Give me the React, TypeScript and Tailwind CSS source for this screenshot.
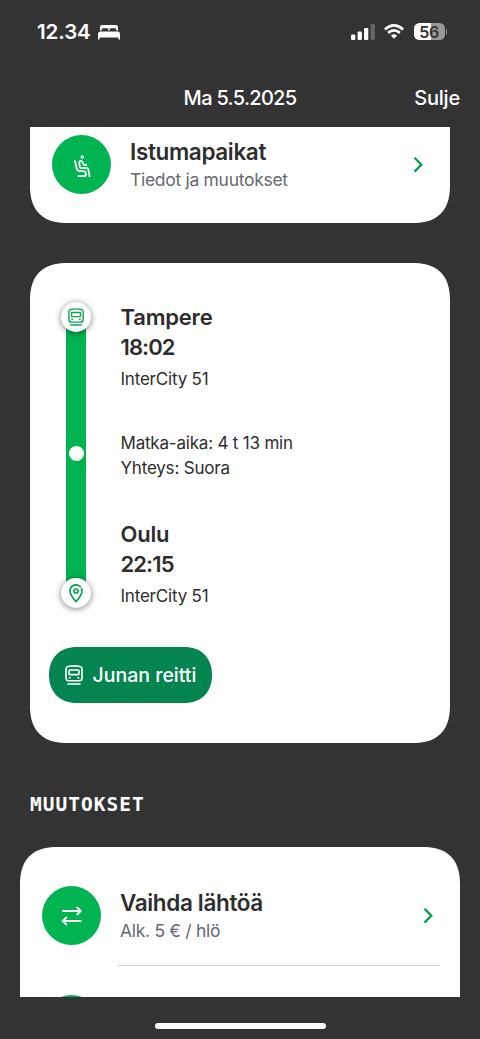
import type { ReactNode } from 'react';

const SANS = "font-['Inter',sans-serif]";

function TrainIcon({ className }: { className?: string }) {
  return (
    <svg viewBox="0 0 18 20" fill="none" stroke="currentColor" strokeWidth="1.600" className={className}>
      <path d="M3 1.500Q9 .3 15 1.500Q16.900 1.900 17 3.800V13Q17 15.700 14.500 15.800H3.500Q1 15.700 1 13V3.800Q1.100 1.900 3 1.500Z" />
      <rect x="4" y="5" width="10" height="4.600" rx="0.800" />
      <path d="M3.700 12.700H5.700M12.300 12.700H14.300" />
      <path d="M3 19H15" strokeLinecap="round" />
    </svg>
  );
}

function PinIcon() {
  return (
    <svg viewBox="0 0 14 19" fill="none" stroke="currentColor" strokeWidth="1.700" className="w-3.5 h-[19px]">
      <path d="M11.200 2.600A6 6 0 0 0 1 7C1 11 4.500 14.800 7 17.600C9.500 14.800 13 11 13 7Q13 5.800 12.500 4.700" strokeLinecap="round" strokeLinejoin="round" />
      <circle cx="7" cy="7" r="2" />
    </svg>
  );
}

function SeatIcon() {
  return (
    <svg viewBox="0 0 18 24" fill="none" stroke="white" strokeWidth="1.800" strokeLinejoin="round" className="w-[18px] h-6 mt-0.5">
      <circle cx="9.200" cy="3" r="1.700" fill="white" stroke="none" />
      <path d="M1.800 6.400L3.800 15Q4.400 17 6.600 17.100H10.300" />
      <path d="M14 10.900H11.200L9.200 7.800Q8.300 6.600 7.100 7.100Q5.900 7.700 6.200 9.300L7 13Q7.300 14.200 8.600 14.200H14Q15.100 14.200 15.300 15.400L16.700 23" />
      <path d="M4.700 22.200H10.900Q13 22.100 12.900 19.700Q12.700 17.100 10.300 17.100" />
    </svg>
  );
}

function SwapIcon() {
  return (
    <svg viewBox="0 0 22 20" fill="none" stroke="white" strokeWidth="1.900" className="w-[22px] h-5">
      <path d="M1 5H19.500M15.700 1L19.700 5L15.700 9" />
      <path d="M20.500 15H2M5.800 11L1.800 15L5.800 19" />
    </svg>
  );
}

function Chevron() {
  return (
    <svg viewBox="0 0 10 16" fill="none" stroke="#0a9c4c" strokeWidth="2.300" className="w-2.5 h-4">
      <path d="M1.500 .8L8.300 7.700L1.500 14.600" />
    </svg>
  );
}

function StatusBar() {
  return (
    <div className="h-[65px] flex items-center justify-between pl-[37px] pr-[33px] text-white">
      <div className="flex items-center gap-[7px]">
        <span className="text-[20.5px] font-semibold tracking-[-0.1px]">12.34</span>
        <svg viewBox="0 0 22 15" fill="white" className="w-[22px] h-[15px]">
          <path d="M2 5.500V2Q2 0 4 0H18Q20 0 20 2V5.500H18.200V4.500Q18.200 3.300 17 3.300H12.800Q11.700 3.300 11.700 4.500V5.500H10.300V4.500Q10.300 3.300 9.200 3.300H5Q3.800 3.300 3.800 4.500V5.500Z" />
          <path d="M0 14.500V9Q0 6.500 2.500 6.500H19.500Q22 6.500 22 9V14.500H20.400V12.400H1.600V14.500Z" />
        </svg>
      </div>
      <div className="flex items-center -mt-0.5">
        <svg viewBox="0 0 24 16" fill="white" className="w-6 h-4">
          <rect x="0" y="10.500" width="4.300" height="5.500" rx="1.200" />
          <rect x="6.600" y="7.500" width="4.300" height="8.500" rx="1.200" />
          <rect x="13" y="4" width="4.300" height="12" rx="1.200" />
          <rect x="19.600" y="0" width="4.300" height="16" rx="1.200" opacity="0.250" />
        </svg>
        <svg viewBox="0 0 20 15" fill="none" stroke="white" strokeWidth="2.700" className="w-5 h-[15px] ml-[9px]">
          <path d="M.9 5.400Q10-2.600 19.100 5.400" />
          <path d="M4.100 8.900Q10 3.900 15.900 8.900" />
          <path d="M6.900 11.500Q10 9 13.100 11.500L10 14.800Z" fill="white" stroke="none" />
        </svg>
        <div className="ml-[10px] w-[31px] h-[17px] rounded-[5.5px] bg-linear-to-r from-white from-56% to-[#989898] to-56% flex items-center justify-center text-[#333] text-[16px] leading-none font-semibold tracking-[-0.5px]">
          56
        </div>
        <div className="ml-px w-[1.500px] h-1.5 rounded-r-full bg-[#8b8b8b]" />
      </div>
    </div>
  );
}

type ActionRowProps = { icon: ReactNode; title: string; subtitle: string };

function ActionRow({ icon, title, subtitle }: ActionRowProps) {
  return (
    <div className="flex items-center pl-[22px] pr-[27px]">
      <div className="size-[59px] rounded-full bg-[#00b451] flex items-center justify-center shrink-0">{icon}</div>
      <div className="ml-[19px] flex-1 whitespace-nowrap">
        <div className="text-[22.5px] leading-[27px] font-semibold tracking-[-0.35px] text-[#2d2d2d]">{title}</div>
        <div className="mt-0.5 text-[17.5px] leading-[25px] tracking-[-0.3px] text-[#66696f]">{subtitle}</div>
      </div>
      <Chevron />
    </div>
  );
}

type StopProps = { city: string; time: string; train: string };

function Stop({ city, time, train }: StopProps) {
  return (
    <div>
      <div className="text-[22px] leading-[29px] font-semibold tracking-[-0.2px]">{city}</div>
      <div className="text-[22px] leading-[30px] font-semibold tracking-[-0.9px]">{time}</div>
      <div className="mt-[5px] text-[17px] leading-[25px] tracking-[-0.2px]">{train}</div>
    </div>
  );
}

function StopMarker({ children }: { children: ReactNode }) {
  return (
    <div className="relative size-[30px] rounded-full bg-white text-[#0aa552] flex items-center justify-center shadow-[0_1px_6px_rgba(0,0,0,0.5)]">
      {children}
    </div>
  );
}

function JourneyCard() {
  return (
    <section className="mt-10 mx-[30px] h-[480px] rounded-[31px] supports-[corner-shape:squircle]:rounded-[38px] [corner-shape:superellipse(1.3)] bg-white pt-10 text-[#2d2d2d]">
      <div className="flex pl-[31px] h-[306px]">
        <div className="-mt-px h-[306px] w-[30px] flex flex-col items-center">
          <StopMarker>
            <TrainIcon className="w-4 h-[18px]" />
          </StopMarker>
          <div className="-my-1 w-5 flex-1 bg-[#00b451] flex items-center justify-center pb-[3px]">
            <div className="size-[15px] rounded-full bg-white" />
          </div>
          <StopMarker>
            <PinIcon />
          </StopMarker>
        </div>
        <div className="ml-[29.5px] whitespace-nowrap">
          <Stop city="Tampere" time="18:02" train="InterCity 51" />
          <div className="my-[39px] text-[17px] leading-[25px] tracking-[-0.2px]">
            <p>Matka-aika: 4 t 13 min</p>
            <p>Yhteys: Suora</p>
          </div>
          <Stop city="Oulu" time="22:15" train="InterCity 51" />
        </div>
      </div>
      <button className="ml-[19px] mt-[38px] w-[163px] h-14 rounded-full supports-[corner-shape:squircle]:rounded-[32px] [corner-shape:superellipse(1.15)] bg-[#048550] text-white flex items-center justify-center gap-2.5 text-[19.5px] font-medium whitespace-nowrap">
        <TrainIcon className="w-[18px] h-5" />
        <span className="pt-0.5">Junan reitti</span>
      </button>
    </section>
  );
}

export default function App() {
  return (
    <div className={`w-[480px] h-[1039px] overflow-hidden bg-[#333] flex flex-col antialiased ${SANS}`}>
      <StatusBar />
      <header className="h-[62px] pt-[3px] grid grid-cols-[1fr_auto_1fr] items-center px-5 text-white text-[20px] font-medium">
        <span />
        <h1 className="tracking-[-0.7px]">Ma 5.5.2025</h1>
        <button className="justify-self-end tracking-[-0.2px]">Sulje</button>
      </header>

      <main className="h-[870px] overflow-hidden">
        <section className="mx-[30px] h-24 rounded-b-[31px] supports-[corner-shape:squircle]:rounded-b-[38px] [corner-shape:superellipse(1.3)] bg-white pt-2">
          <ActionRow icon={<SeatIcon />} title="Istumapaikat" subtitle="Tiedot ja muutokset" />
        </section>

        <JourneyCard />

        <h2 className="mt-[50px] ml-[30px] text-[19.5px] leading-6 font-bold tracking-[1px] text-white font-['DejaVu_Sans_Mono',monospace]">
          MUUTOKSET
        </h2>

        <section className="mt-[30px] mx-5 rounded-t-[31px] supports-[corner-shape:squircle]:rounded-t-[38px] [corner-shape:superellipse(1.3)] bg-white pt-[39px]">
          <ActionRow icon={<SwapIcon />} title="Vaihda lähtöä" subtitle="Alk. 5 € / hlö" />
          <div className="mt-5 ml-[98px] mr-5 h-px bg-[#d2d2d2]" />
          <div className="mt-[29px] ml-[22px] size-[59px] rounded-full bg-[#00b451]" />
        </section>
      </main>

      {/* Home indicator */}
      <div className="flex-1 flex justify-center pt-[26px]">
        <div className="w-[171px] h-1.5 rounded-full bg-white" />
      </div>
    </div>
  );
}
